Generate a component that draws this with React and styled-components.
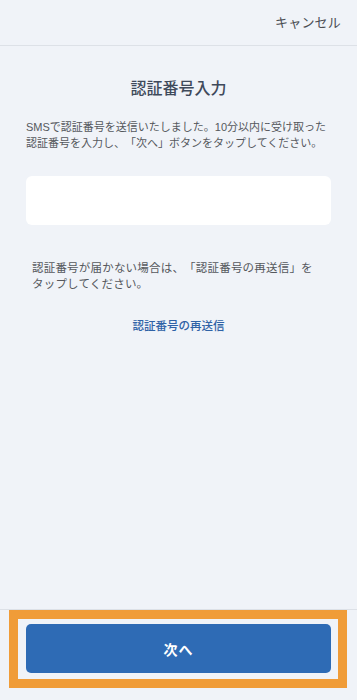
import React from "react";
import styled, { createGlobalStyle } from "styled-components";

const Global = createGlobalStyle`
  html, body { margin: 0; padding: 0; background: #f0f3f8; }
  body {
    font-family: "Liberation Sans", "Noto Sans CJK JP", sans-serif;
    text-spacing-trim: space-all;
  }
  * { box-sizing: border-box; }
`;

const Page = styled.div`
  min-height: 700px;
  display: flex;
  flex-direction: column;
  background: #f0f3f8;
`;

const Header = styled.header`
  height: 46px;
  border-bottom: 1px solid #dde1e7;
  display: flex;
  align-items: center;
  justify-content: flex-end;
  padding: 0 16px 2px 0;
`;

const Cancel = styled.button`
  border: 0;
  background: none;
  padding: 0;
  font: inherit;
  font-size: 13px;
  color: #4a4d52;
  letter-spacing: 0.2px;
`;

const Main = styled.main`
  flex: 1;
  display: flex;
  flex-direction: column;
  padding: 0 26px;
`;

const Title = styled.h1`
  margin: 31px 0 0;
  text-align: center;
  font-size: 16px;
  line-height: 24px;
  font-weight: 500;
  color: #3f4a5b;
`;

const Text = styled.p`
  margin: ${(p) => p.$mt}px 0 0;
  padding-left: ${(p) => p.$indent || 0}px;
  font-size: ${(p) => p.$size}px;
  line-height: 16px;
  color: #55585d;
  letter-spacing: ${(p) => p.$ls || 0}px;
  white-space: nowrap;
`;

const CodeInput = styled.input`
  margin-top: 25px;
  height: 49px;
  border: 0;
  border-radius: 6px;
  background: #ffffff;
  outline: none;
  padding: 0 12px;
  font-size: 16px;
`;

const Resend = styled.a`
  margin-top: 26px;
  align-self: center;
  font-size: 11.5px;
  line-height: 16px;
  font-weight: 500;
  color: #2f62a6;
  text-decoration: none;
`;

const Footer = styled.footer`
  border-top: 1px solid #dde1e7;
  padding: 0 10px 12px 9px;
`;

const Highlight = styled.div`
  border: 9px solid #f09c38;
  padding: 5px 7px 6px 8px;
`;

const NextButton = styled.button`
  width: 100%;
  height: 49px;
  border: 0;
  border-radius: 5px;
  background: #2e6bb5;
  color: #ffffff;
  font: inherit;
  font-size: 14px;
  font-weight: 700;
  letter-spacing: 1px;
`;

export default function App() {
  return (
    <>
      <Global />
      <Page>
        <Header>
          <Cancel>キャンセル</Cancel>
        </Header>
        <Main>
          <Title>認証番号入力</Title>
          <Text $mt={18} $size={11} $ls={0}>
            SMSで認証番号を送信いたしました。10分以内に受け取った
            <br />
            認証番号を入力し、「次へ」ボタンをタップしてください。
          </Text>
          <CodeInput type="text" inputMode="numeric" aria-label="認証番号" />
          <Text $mt={35} $size={11.5} $indent={6} $ls={0.2}>
            認証番号が届かない場合は、「認証番号の再送信」を
            <br />
            タップしてください。
          </Text>
          <Resend href="#">認証番号の再送信</Resend>
        </Main>
        <Footer>
          <Highlight>
            <NextButton>次へ</NextButton>
          </Highlight>
        </Footer>
      </Page>
    </>
  );
}
